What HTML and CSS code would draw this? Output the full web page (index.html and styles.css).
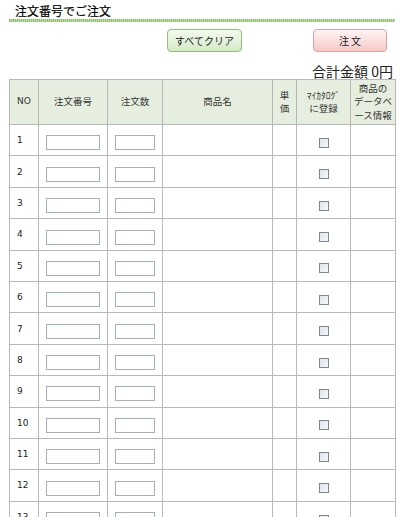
FILE: index.html
```html
<!DOCTYPE html>
<html lang="ja">
<head>
<meta charset="utf-8">
<link rel="stylesheet" href="styles.css">
</head>
<body>
<div class="page">
  <h1 class="title">注文番号でご注文</h1>
  <div class="rule"></div>
  <div class="actions">
    <button class="btn btn-clear">すべてクリア</button>
    <button class="btn btn-order">注&nbsp;文</button>
  </div>
  <div class="total">合計金額 0円</div>
  <table class="orders">
    <colgroup>
      <col class="c-no"><col class="c-code"><col class="c-qty"><col class="c-name"><col class="c-price"><col class="c-fav"><col class="c-db">
    </colgroup>
    <thead>
      <tr>
        <th class="h-no">NO</th>
        <th>注文番号</th>
        <th>注文数</th>
        <th>商品名</th>
        <th>単<br>価</th>
        <th>ﾏｲｶﾀﾛｸﾞ<br>に登録</th>
        <th>商品の<br>データベ<br>ース情報</th>
      </tr>
    </thead>
    <tbody id="rows"></tbody>
  </table>
</div>
<script>
  var tb = document.getElementById('rows');
  var html = '';
  for (var i = 1; i <= 13; i++) {
    html += '<tr><td class="no">' + i + '</td>' +
      '<td class="ctr"><span class="inp inp-code"></span></td>' +
      '<td class="ctr"><span class="inp inp-qty"></span></td>' +
      '<td></td><td></td>' +
      '<td class="ctr"><span class="chk"></span></td><td></td></tr>';
  }
  tb.innerHTML = html;
</script>
</body>
</html>
```
FILE: styles.css
```css
html, body {
  margin: 0;
  padding: 0;
  background: #fff;
}
body {
  font-family: "Noto Sans CJK JP", "DejaVu Sans", sans-serif;
  color: #222;
  overflow: hidden;
}
.page {
  padding: 0 5px 0 9px;
  width: 386px;
}
.title {
  margin: 0;
  padding: 3px 0 0 6px;
  font-size: 12px;
  line-height: 15px;
  font-weight: normal;
  color: #000;
  -webkit-text-stroke: 0.2px #000;
}
.rule {
  height: 3px;
  margin-top: 1px;
  background: repeating-linear-gradient(90deg, #8cc46c 0 1px, #b9dca5 1px 2px);
}
.actions {
  display: flex;
  justify-content: flex-end;
  gap: 71px;
  padding: 7px 8px 0 0;
  height: 23px;
}
.btn {
  width: 75px;
  height: 23px;
  border-radius: 4px;
  font-family: "Noto Sans CJK JP", sans-serif;
  font-size: 10px;
  padding: 0;
  line-height: 20px;
  color: #222;
}
.btn-clear {
  border: 1px solid #8fbf7a;
  background: linear-gradient(#f4faef, #d3eac6);
}
.btn-order {
  width: 74px;
  border: 1px solid #e0a0a0;
  background: linear-gradient(#fff4f4, #f6caca);
}
.total {
  text-align: right;
  font-size: 14px;
  line-height: 15px;
  padding: 12px 2px 0 0;
  height: 15px;
  color: #222;
}
.orders {
  border-collapse: collapse;
  table-layout: fixed;
  width: 386px;
  margin-top: 0;
}
.c-no { width: 29px; }
.c-code { width: 69px; }
.c-qty { width: 55px; }
.c-name { width: 110px; }
.c-price { width: 24px; }
.c-fav { width: 54px; }
.c-db { width: 45px; }
.orders th, .orders td {
  border: 1px solid #b8b8b8;
  padding: 0;
}
.orders th {
  background: #e6efdf;
  height: 44px;
  font-weight: normal;
  font-size: 9.5px;
  line-height: 13.5px;
  color: #333;
  text-align: center;
}
.orders th.h-no {
  text-align: left;
  padding-left: 7px;
  font-family: "DejaVu Sans", sans-serif;
  font-size: 9px;
}
.orders td {
  height: 30.4px;
}
.orders td.no {
  font-family: "DejaVu Sans", sans-serif;
  font-size: 9px;
  padding-left: 7px;
  color: #222;
}
.orders td.ctr {
  text-align: center;
}
.inp {
  display: inline-block;
  vertical-align: middle;
  height: 13px;
  border: 1px solid #a3b0bd;
  background: #fff;
}
.inp-code { width: 52px; }
.inp-qty { width: 38px; }
.chk {
  display: inline-block;
  vertical-align: middle;
  width: 8px;
  height: 8px;
  border: 1px solid #7a8894;
  background: linear-gradient(135deg, #e0e4e8, #f6f8fa);
}
```
